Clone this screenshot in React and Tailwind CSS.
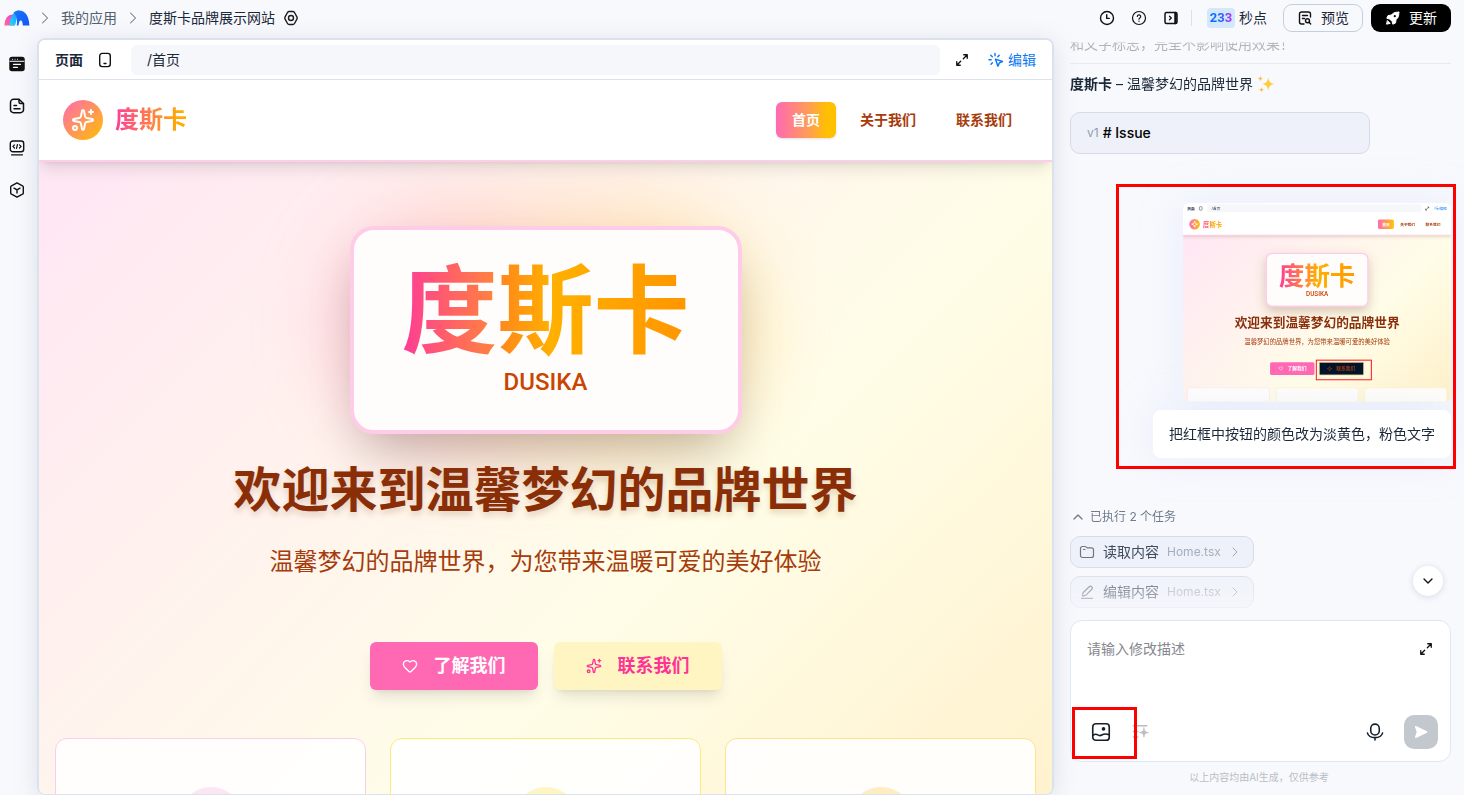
import React from 'react'
import { Heart, ChevronRight, ChevronUp, ChevronDown } from 'lucide-react'

const navItems = [
  { label: '首页', active: true },
  { label: '关于我们', active: false },
  { label: '联系我们', active: false },
]

const cards = [
  { border: 'border-[#fccee8]', dot: 'bg-[#fde6f3]' },
  { border: 'border-[#ffe97a]', dot: 'bg-[#fff5c2]' },
  { border: 'border-[#fee38a]', dot: 'bg-[#feedc0]' },
]

// ---------- icons ----------

function Icon({ size = 16, stroke = 1.5, className = '', children }) {
  return (
    <svg
      width={size}
      height={size}
      viewBox="0 0 16 16"
      fill="none"
      stroke="currentColor"
      strokeWidth={stroke}
      strokeLinecap="round"
      strokeLinejoin="round"
      className={`shrink-0 ${className}`}
      aria-hidden="true"
    >
      {children}
    </svg>
  )
}

function AppLogo() {
  return (
    <svg width="26" height="16" viewBox="0 0 26 16" className="shrink-0" aria-hidden="true">
      <defs>
        <linearGradient id="lgPink" x1="0" y1="1" x2="1" y2="0">
          <stop offset="0" stopColor="#ff6a8f" />
          <stop offset="1" stopColor="#f03fe0" />
        </linearGradient>
        <linearGradient id="lgCyan" x1="0" y1="1" x2="1" y2="0">
          <stop offset="0" stopColor="#27dcf5" />
          <stop offset="1" stopColor="#1a8bff" />
        </linearGradient>
        <linearGradient id="lgBlue" x1="0" y1="0" x2="1" y2="1">
          <stop offset="0" stopColor="#1677ff" />
          <stop offset="1" stopColor="#1554f5" />
        </linearGradient>
      </defs>
      <path d="M.5 15.500C.5 9 3.500 4.500 9 4.500l1 11z" fill="url(#lgPink)" />
      <path d="M5.500 15.500C6 7 9.500 1 15 .6c-2.500 3-1.500 9-4 14.900z" fill="url(#lgCyan)" />
      <path d="M9.500 2.500C11.300 1 13 .4 15.300.4 21 .4 25 5.500 25.400 15.500h-6.600c-.1-3-.8-5-2-5s-2 2-2.300 5h-1.800c1-5 .3-9.500-3.200-13z" fill="url(#lgBlue)" />
    </svg>
  )
}

function SparkleIcon({ size, stroke = 2, className = '' }) {
  return (
    <svg
      width={size}
      height={size}
      viewBox="0 0 24 24"
      fill="none"
      stroke="currentColor"
      strokeWidth={stroke}
      strokeLinecap="round"
      strokeLinejoin="round"
      className={`shrink-0 ${className}`}
      aria-hidden="true"
    >
      <path d="M11.017 2.814a1 1 0 0 1 1.966 0l1.051 5.558a2 2 0 0 0 1.594 1.594l5.558 1.051a1 1 0 0 1 0 1.966l-5.558 1.051a2 2 0 0 0-1.594 1.594l-1.051 5.558a1 1 0 0 1-1.966 0l-1.051-5.558a2 2 0 0 0-1.594-1.594l-5.558-1.051a1 1 0 0 1 0-1.966l5.558-1.051a2 2 0 0 0 1.594-1.594z" />
      <path d="M20 2v4M22 4h-4" />
      <circle cx="4" cy="20" r="2" />
    </svg>
  )
}

function ExpandIcon({ className }) {
  return (
    <Icon size={14} stroke={1.5} className={className}>
      <path d="M10 2h4v4M14 2L9.500 6.500M6 14H2v-4M2 14l4.500-4.500" />
    </Icon>
  )
}

function SparkleEmoji() {
  return (
    <svg width="18" height="18" viewBox="0 0 16 16" role="img" aria-label="sparkles" className="shrink-0">
      <path d="M10 2c.6 4 1.600 5.200 5.800 6-4.200.8-5.200 2-5.800 6.200C9.400 10 8.400 8.800 4.200 8 8.400 7.200 9.400 6 10 2z" fill="#ffcb3d" />
      <path d="M3 .6c.3 1.800.8 2.300 2.500 2.600C3.800 3.500 3.300 4 3 5.800 2.700 4 2.200 3.500.5 3.200 2.200 2.900 2.700 2.400 3 .6z" fill="#ffb74a" />
      <path d="M4 10.600c.3 1.600.8 2.100 2.400 2.400-1.600.3-2.100.8-2.400 2.400-.3-1.600-.8-2.100-2.400-2.400 1.600-.3 2.100-.8 2.400-2.400z" fill="#ffb74a" />
    </svg>
  )
}

// ---------- header & sidebar ----------

function Header() {
  return (
    <header className="flex h-9 shrink-0 items-center pr-[13px] pl-1 text-sm text-[#1b2838]">
      <AppLogo />
      <nav className="flex items-center">
        <ChevronRight size={20} strokeWidth={1.25} className="mr-1.5 ml-[5px] text-[#6b7785]" />
        <a href="#apps" className="text-[#545f70]">我的应用</a>
        <ChevronRight size={20} strokeWidth={1.25} className="mx-1.5 text-[#6b7785]" />
        <span>度斯卡品牌展示网站</span>
      </nav>
      <button className="ml-2" aria-label="设置">
        <Icon stroke={1.4} className="text-[#1c1c1c]">
          <path d="M6.200 1.500h3.600a2 2 0 0 1 1.700 1l2.400 4.300a2.400 2.400 0 0 1 0 2.400l-2.400 4.300a2 2 0 0 1-1.700 1H6.200a2 2 0 0 1-1.700-1L2.100 9.200a2.400 2.400 0 0 1 0-2.400l2.400-4.300a2 2 0 0 1 1.700-1z" />
          <circle cx="8" cy="8" r="2.500" />
        </Icon>
      </button>

      <div className="ml-auto flex items-center gap-4 text-[#111]">
        <button aria-label="历史">
          <Icon stroke={1.4}>
            <circle cx="8" cy="8" r="6.500" />
            <path d="M7.700 4.800v3.600h2.600" />
          </Icon>
        </button>
        <button aria-label="帮助">
          <Icon stroke={1.2}>
            <circle cx="8" cy="8" r="6.500" />
            <path d="M6.300 6.500a1.700 1.700 0 1 1 2.500 1.500c-.5.300-.8.600-.8 1.200" />
            <path d="M8 11.200v.1" />
          </Icon>
        </button>
        <button aria-label="收起面板">
          <Icon stroke={1.5}>
            <rect x="2" y="2.500" width="12" height="11" rx="1.500" />
            <path d="M12.500 3v10" strokeWidth="2.500" />
            <path d="M6.500 6.200L8.300 8 6.500 9.800" strokeWidth="1.300" />
          </Icon>
        </button>
      </div>
      <div className="mx-3 h-4 w-px bg-[#dde2ea]" />
      <div className="ml-[3px] flex items-center gap-1">
        <span className="flex h-5 w-7 items-center justify-center rounded-sm bg-[#d4e7fb] font-['Roboto',sans-serif] text-[13px]">
          <span className="bg-[linear-gradient(90deg,#0b6cff_40%,#b62df0)] bg-clip-text font-bold text-transparent">233</span>
        </span>
        <span>秒点</span>
      </div>
      <button className="ml-4 flex h-7 w-20 items-center justify-center gap-2 rounded-[9px] border border-[#c3cfdd]">
        <Icon stroke={1.4} className="text-[#111]">
          <path d="M13.500 7V4a2 2 0 0 0-2-2h-7a2 2 0 0 0-2 2v8a2 2 0 0 0 2 2H7M5.500 5.500h5M5.500 8.500h2" />
          <circle cx="10.500" cy="10.700" r="2" />
          <path d="M12 12.200l1.700 1.800" />
        </Icon>
        预览
      </button>
      <button className="ml-2 flex h-7 w-20 items-center justify-center gap-2 rounded-[9px] bg-black text-white">
        <Icon stroke={1} className="text-white">
          <path d="M13.800 2.200c-3.500-.4-5.800.8-7.400 2.800L3 5.600 1.800 8.300l2.800.7 2.500 2.500.7 2.700 2.700-1.200.6-3.400c2-1.600 3.100-3.900 2.700-7.400z" fill="currentColor" />
          <path d="M2.600 10.800l2.600 2.600-3.300.7z" fill="currentColor" />
          <circle cx="9.800" cy="6.200" r="1.100" fill="#000" stroke="none" />
        </Icon>
        更新
      </button>
    </header>
  )
}

function Sidebar() {
  return (
    <aside className="flex w-[37px] shrink-0 flex-col items-center gap-[26px] pt-[18px] pr-[3px] text-[#111]">
      <button aria-label="页面">
        <Icon>
          <rect x="1" y="1.500" width="14" height="13" rx="2" fill="currentColor" />
          <path d="M1 5.300h14" stroke="#fff" strokeWidth="1" />
          <path d="M4.500 8.300h7M4.500 11.300h4" stroke="#fff" strokeWidth="1.300" />
          <path d="M3.500 3.300h.1M6 3.300h.1M8.500 3.300h.1" stroke="#fff" strokeWidth="1" />
        </Icon>
      </button>
      <button aria-label="文档">
        <Icon>
          <path d="M10 1.300H4.500a3 3 0 0 0-3 3v7.400a3 3 0 0 0 3 3h7a3 3 0 0 0 3-3V5.500z" />
          <path d="M10 1.500v2.500a1.500 1.500 0 0 0 1.500 1.500h2.800M5 7.500h2.500M5 10.800h6" />
        </Icon>
      </button>
      <button aria-label="代码">
        <Icon stroke={1.4}>
          <rect x="1.300" y="1" width="13.400" height="10.800" rx="2.500" />
          <path d="M5.500 4.800L3.900 6.400l1.600 1.600M10.500 4.800l1.600 1.600L10.500 8M8.500 4.500l-1 3.800M2.500 14.800h11" strokeWidth="1.200" />
        </Icon>
      </button>
      <button aria-label="插件">
        <Icon stroke={1.4}>
          <path d="M8 .9l5.500 2.900a1.500 1.500 0 0 1 .8 1.300v5.800a1.500 1.500 0 0 1-.8 1.300L8 15.100l-5.500-2.900a1.500 1.500 0 0 1-.8-1.300V5.100a1.500 1.500 0 0 1 .8-1.300z" />
          <path d="M5 6.200l3 1.700 3-1.700M8 8v3" />
        </Icon>
      </button>
    </aside>
  )
}

// ---------- site preview ----------

function PreviewToolbar() {
  return (
    <div className="flex h-10 shrink-0 items-center border-b border-[#dde3ec] bg-white px-4 text-sm text-[#1b2838]">
      <span className="font-bold">页面</span>
      <button className="ml-3.5" aria-label="移动端">
        <Icon stroke={1.4} className="text-[#111]">
          <rect x="2.700" y="1.400" width="10.600" height="13.200" rx="2.500" />
          <path d="M7 11.500h2" />
        </Icon>
      </button>
      <input
        aria-label="页面路径"
        defaultValue="/首页"
        className="mr-[15px] ml-[18px] h-[30px] min-w-0 flex-1 rounded-md bg-[#f5f7fb] px-4 pb-0.5"
      />
      <button aria-label="全屏"><ExpandIcon className="text-[#111]" /></button>
      <button className="ml-[19px] flex items-center gap-1 text-[#0b78f5]">
        <Icon stroke={1.4}>
          <path d="M7.500 7.200l7 2.300-3.100 1.400-1.500 3.300z" />
          <path d="M7 1.500v2.200M2.800 3.300l1.500 1.500M1 7.800h2.200M3 12.200l1.400-1.500M11.200 3.200L9.800 4.800" />
        </Icon>
        编辑
      </button>
    </div>
  )
}

function SiteNav() {
  return (
    <div className="relative flex h-[82px] shrink-0 items-center border-b-2 border-[#fccee8] bg-white px-6 shadow-lg">
      <div className="flex h-10 w-10 items-center justify-center rounded-full bg-[linear-gradient(135deg,#ff69b4,#ffc000)] text-white">
        <SparkleIcon size={24} />
      </div>
      <span className="ml-3 bg-[linear-gradient(90deg,#ff3c96,#ff8048_50%,#ffab00_90%)] bg-clip-text text-2xl font-bold text-transparent">
        度斯卡
      </span>
      <nav className="ml-auto flex gap-2 text-sm font-bold">
        {navItems.map((item) => (
          <a
            key={item.label}
            href="#nav"
            className={
              item.active
                ? 'flex h-9 items-center rounded-md bg-[linear-gradient(90deg,#ff69b4,#ff9d55_55%,#ffc000_85%)] px-4 text-white shadow-sm'
                : 'flex h-9 items-center px-4 text-[#a63c0c]'
            }
          >
            {item.label}
          </a>
        ))}
      </nav>
    </div>
  )
}

function Hero() {
  return (
    <div className="min-h-0 flex-1 overflow-hidden bg-[linear-gradient(135deg,#ffe6f4_0%,#fffde8_62%,#fff2ce_100%)] px-4 pt-16">
      <div className="flex flex-col items-center text-center">
        <div className="relative">
          <div className="absolute -inset-4 rounded-full bg-[linear-gradient(90deg,#ffa8c8,#ffc89a,#ffe08a)] opacity-60 blur-2xl" />
          <div className="relative rounded-3xl border-4 border-[#fecce8] bg-[#fffdfc] px-12 py-8 shadow-2xl">
            <div className="bg-[linear-gradient(90deg,#ff3c96,#ff8040_31%,#ff8c18_36%,#ffb000_52%,#ff9500)] bg-clip-text text-8xl leading-none font-bold text-transparent">
              度斯卡
            </div>
            <div className="mt-2 font-['Roboto',sans-serif] text-2xl font-medium text-[#ca4500]">DUSIKA</div>
          </div>
        </div>
        <h1 className="relative mt-8 text-5xl font-bold text-[#8a2e08] [text-shadow:0_4px_6px_rgba(120,60,10,0.2)]">
          欢迎来到温馨梦幻的品牌世界
        </h1>
        <p className="relative mt-8 text-2xl text-[#a63c0c]">温馨梦幻的品牌世界，为您带来温暖可爱的美好体验</p>
        <div className="mt-16 flex gap-4 text-lg font-bold">
          <button className="flex h-12 items-center gap-4 rounded-md bg-[#ff69b4] px-8 text-white shadow-lg">
            <Heart size={16} strokeWidth={2} />
            了解我们
          </button>
          <button className="flex h-12 items-center gap-4 rounded-md bg-[#fff5c2] px-8 text-[#ff3296] shadow-lg">
            <SparkleIcon size={16} />
            联系我们
          </button>
        </div>
      </div>
      <div className="mt-12 grid grid-cols-3 gap-6">
        {cards.map((c) => (
          <div key={c.border} className={`flex h-64 justify-center rounded-xl border bg-white/90 pt-12 ${c.border}`}>
            <div className={`h-16 w-16 rounded-full ${c.dot}`} />
          </div>
        ))}
      </div>
    </div>
  )
}

// ---------- chat ----------

// small snapshot of the site attached to the user's message
function Snapshot() {
  return (
    <svg
      viewBox="0 0 1013 752"
      className="h-[199px] w-[268px] rounded-md font-['Roboto','Noto_Sans_CJK_SC',sans-serif]"
      role="img"
      aria-label="页面截图"
    >
      <defs>
        <linearGradient id="snBg" gradientUnits="userSpaceOnUse" x1="0" y1="122" x2="822" y2="944">
          <stop offset="0" stopColor="#ffe6f4" />
          <stop offset="0.62" stopColor="#fffde8" />
          <stop offset="1" stopColor="#fff0c8" />
        </linearGradient>
        <linearGradient id="snText">
          <stop offset="0" stopColor="#ff3c96" />
          <stop offset="0.32" stopColor="#ff8040" />
          <stop offset="0.5" stopColor="#ffb000" />
          <stop offset="1" stopColor="#ff9a00" />
        </linearGradient>
        <linearGradient id="snBtn">
          <stop offset="0" stopColor="#ff69b4" />
          <stop offset="1" stopColor="#ffc400" />
        </linearGradient>
        <filter id="snShadow" x="-20%" y="-20%" width="140%" height="150%">
          <feDropShadow dx="0" dy="18" stdDeviation="20" floodColor="#7a5030" floodOpacity="0.3" />
        </filter>
        <filter id="snNav" x="-5%" y="-5%" width="110%" height="130%">
          <feDropShadow dx="0" dy="8" stdDeviation="7" floodColor="#7a5030" floodOpacity="0.2" />
        </filter>
      </defs>
      <rect width="1013" height="752" fill="url(#snBg)" />
      <rect width="1013" height="121" fill="#fff" filter="url(#snNav)" />
      <rect y="120" width="1013" height="3" fill="#fccee8" />
      <rect x="92" y="5" width="810" height="30" rx="6" fill="#f5f7fb" />
      <text x="16" y="26" fontSize="14" fontWeight="700" fill="#1b2838">页面</text>
      <rect x="62" y="14" width="10" height="13" rx="2" fill="none" stroke="#444" strokeWidth="2" />
      <text x="108" y="26" fontSize="14" fill="#1b2838">/首页</text>
      <path d="M918 26l10-10M924 15h5v5M917 21v6h5" fill="none" stroke="#222" strokeWidth="2" />
      <path d="M951 14l3 4M960 12v4M950 22h4M958 19l8 3-4 4z" fill="none" stroke="#0b78f5" strokeWidth="2" />
      <text x="969" y="26" fontSize="14" fill="#0b78f5">编辑</text>
      <circle cx="44" cy="80" r="20" fill="url(#snBtn)" />
      <path d="M44 69l3 8 8 3-8 3-3 8-3-8-8-3 8-3z" fill="none" stroke="#fff" strokeWidth="3" />
      <text x="76" y="89" fontSize="24" fontWeight="700" fill="url(#snText)">度斯卡</text>
      <rect x="737" y="62" width="60" height="36" rx="6" fill="url(#snBtn)" />
      <text x="753" y="85" fontSize="14" fontWeight="700" fill="#fff">首页</text>
      <text x="821" y="85" fontSize="14" fontWeight="700" fill="#a63c0c">关于我们</text>
      <text x="917" y="85" fontSize="14" fontWeight="700" fill="#a63c0c">联系我们</text>
      <rect x="315" y="190" width="384" height="200" rx="22" fill="#fffdfc" stroke="#fecce8" strokeWidth="5" filter="url(#snShadow)" />
      <text x="507" y="308" fontSize="96" fontWeight="700" textAnchor="middle" fill="url(#snText)">度斯卡</text>
      <text x="507" y="352" fontSize="24" fontWeight="500" textAnchor="middle" fill="#ca4500">DUSIKA</text>
      <text x="507" y="469" fontSize="48" fontWeight="700" textAnchor="middle" fill="#89300c">欢迎来到温馨梦幻的品牌世界</text>
      <text x="507" y="532" fontSize="24" textAnchor="middle" fill="#a63c0c">温馨梦幻的品牌世界，为您带来温暖可爱的美好体验</text>
      <rect x="329" y="602" width="168" height="48" rx="6" fill="#ff69b4" />
      <path d="M370 632c-10-7-7-13-3-13 2 0 3 2 3 2s1-2 3-2c4 0 7 6-3 13z" fill="none" stroke="#fff" strokeWidth="2" />
      <text x="395" y="633" fontSize="18" fontWeight="700" fill="#fff">了解我们</text>
      <rect x="515" y="602" width="168" height="48" rx="4" fill="#02142b" stroke="#f3dc90" strokeWidth="3" />
      <path d="M554 617l2 7 7 2-7 2-2 7-2-7-7-2 7-2z" fill="none" stroke="#a63c0c" strokeWidth="2" />
      <text x="579" y="633" fontSize="18" fontWeight="700" fill="#a63c0c">联系我们</text>
      <rect x="504" y="594" width="208" height="74" fill="none" stroke="#ff2020" strokeWidth="4" />
      <path d="M17 752v-42a12 12 0 0 1 12-12h286a12 12 0 0 1 12 12v42z" fill="#fffdfc" stroke="#fbe0e8" strokeWidth="2" />
      <path d="M352 752v-42a12 12 0 0 1 12-12h286a12 12 0 0 1 12 12v42z" fill="#fffdfa" stroke="#fbeec0" strokeWidth="2" />
      <path d="M687 752v-42a12 12 0 0 1 12-12h286a12 12 0 0 1 12 12v42z" fill="#fffdf8" stroke="#fbeec0" strokeWidth="2" />
    </svg>
  )
}

function TaskChip({ icon, label, file }) {
  return (
    <button className="flex h-8 w-[184px] items-center rounded-[10px] border border-[#d3dce8] bg-[#eef1f9] pl-2 text-sm text-[#3f4d5e]">
      {icon}
      <span className="ml-2">{label}</span>
      <span className="ml-2 text-xs text-[#a3afbd]">{file}</span>
      <ChevronRight size={16} strokeWidth={1.5} className="ml-1.5 text-[#9aa7b6]" />
    </button>
  )
}

function Chat() {
  return (
    <div className="relative flex min-h-0 flex-1 flex-col">
      <div className="flex min-h-0 flex-1 flex-col justify-end overflow-hidden pr-[13px] pb-3 pl-4 [mask-image:linear-gradient(to_bottom,transparent_4px,rgba(0,0,0,0.3)_5px,rgba(0,0,0,0.4)_16px,#000_36px,#000_calc(100%_-_56px),rgba(0,0,0,0.3)_calc(100%_-_12px),transparent_100%)]">
        <p className="shrink-0 text-sm leading-[22px] text-[#1b2838]">和文字标志，完全不影响使用效果！</p>
        <hr className="mt-2 shrink-0 border-[#dfe4ec]" />
        <p className="mt-2 flex shrink-0 items-center gap-1 text-sm leading-6 text-[#1b2838]">
          <strong>度斯卡</strong>
          <span>–</span>
          <span>温馨梦幻的品牌世界</span>
          <SparkleEmoji />
        </p>
        <div className="mt-4 flex h-[42px] w-[300px] shrink-0 items-center gap-1 rounded-[10px] border border-[#d3dbe7] bg-[#eef1f9] px-4 text-sm">
          <span className="text-xs text-[#929caa]">v1</span>
          <span className="font-medium text-black"># Issue</span>
        </div>

        <div className="relative mt-[49px] flex shrink-0 flex-col items-end gap-2 self-end">
          <div className="rounded-md shadow-[0_0_40px_rgba(200,218,250,0.35)]">
            <Snapshot />
          </div>
          <p className="flex h-12 items-center rounded-lg bg-white px-4 text-sm text-[#1b2838] shadow-[0_0_40px_rgba(200,218,250,0.35)]">
            把红框中按钮的颜色改为淡黄色，粉色文字
          </p>
          <div className="pointer-events-none absolute -top-[19px] -right-[5px] -bottom-[11px] -left-[37px] border-3 border-[#ff0000]" />
        </div>

        <button className="mt-[50px] flex shrink-0 items-center gap-1 self-start text-xs leading-[18px] text-[#6f7c8c]">
          <ChevronUp size={16} strokeWidth={2} />
          已执行 2 个任务
        </button>
        <div className="mt-2.5 flex shrink-0 flex-col gap-2">
          <TaskChip
            label="读取内容"
            file="Home.tsx"
            icon={
              <Icon stroke={1.2} className="text-[#6b7785]">
                <path d="M1.500 4.500a2 2 0 0 1 2-2h2.700c.8 0 1.300 1.300 2.300 1.300h4a2 2 0 0 1 2 2v5.700a2 2 0 0 1-2 2h-9a2 2 0 0 1-2-2zM4.500 5.500h1.500" />
              </Icon>
            }
          />
          <TaskChip
            label="编辑内容"
            file="Home.tsx"
            icon={
              <Icon stroke={1.2} className="text-[#6b7785]">
                <path d="M3.500 12l.5-3.200 6.500-6.300a1.300 1.300 0 0 1 1.900 0l.6.600a1.300 1.300 0 0 1 0 1.900L6.700 11.300zM2.500 14.300h11" />
              </Icon>
            }
          />
        </div>
      </div>
      <button
        aria-label="回到底部"
        className="absolute right-[21px] bottom-6 flex h-[30px] w-[30px] items-center justify-center rounded-full bg-white text-[#111] shadow-[0_1px_6px_rgba(60,80,110,0.18)]"
      >
        <ChevronDown size={16} strokeWidth={2} />
      </button>
    </div>
  )
}

function Composer() {
  return (
    <form
      className="relative mr-[13px] ml-4 shrink-0 rounded-xl border border-[#dbe8f5] bg-white pt-4 pr-3 pb-3 pl-4"
      onSubmit={(e) => e.preventDefault()}
    >
      <div className="flex items-start">
        <textarea
          aria-label="修改描述"
          placeholder="请输入修改描述"
          className="block h-[78px] flex-1 resize-none text-sm leading-6 placeholder:text-[#85888e]"
        />
        <button type="button" className="mt-[5px] mr-[5px]" aria-label="展开">
          <ExpandIcon className="text-[#111]" />
        </button>
      </div>
      <div className="flex h-[34px] items-center text-[#14202c]">
        <button type="button" className="ml-1" aria-label="上传图片">
          <Icon size={20} stroke={1.3}>
            <rect x="1.400" y="1.400" width="13.200" height="13.200" rx="2.500" />
            <path d="M1.600 10.600c1.500-1 2.700-1 3.800-.3s1.900.9 3.200.1 3-1.300 5.800-.3" />
            <circle cx="10" cy="5.500" r=".8" fill="currentColor" />
          </Icon>
        </button>
        <button type="button" className="ml-5 text-[#b9bcc1]" aria-label="优化描述">
          <Icon size={18} stroke={1.3}>
            <path d="M2 2.500h12M2 7.500h4M2 12.500h4" />
            <path d="M11.500 4.300c.4 3 1 3.700 4 4.200-3 .5-3.600 1.200-4 4.200-.4-3-1-3.700-4-4.200 3-.5 3.600-1.200 4-4.200z" fill="currentColor" strokeWidth=".6" />
          </Icon>
        </button>
        <button type="button" className="mr-5 ml-auto" aria-label="语音输入">
          <Icon size={18} stroke={1.4}>
            <rect x="4.200" y="1" width="7.600" height="9.600" rx="3.800" />
            <path d="M1.300 9c.8 2.700 3.300 4 6.700 4s5.900-1.300 6.700-4M8 13v2" />
          </Icon>
        </button>
        <button
          type="submit"
          aria-label="发送"
          className="flex h-[34px] w-[34px] items-center justify-center rounded-[10px] bg-[#c3c7ce] text-white"
        >
          <Icon size={16}>
            <path d="M2.700 2.800l11 5.200-11 5.200L4.500 8z" fill="currentColor" />
          </Icon>
        </button>
      </div>
      <div className="pointer-events-none absolute bottom-[2px] left-[1px] h-[52px] w-[65px] border-3 border-[#ff0000]" />
    </form>
  )
}

export default function App() {
  return (
    <div className="flex h-screen flex-col overflow-hidden bg-[#f8f9fd] font-['Inter','Noto_Sans_CJK_SC',sans-serif]">
      <Header />
      <div className="flex min-h-0 flex-1 pt-0.5">
        <Sidebar />
        <main className="flex min-w-0 flex-1 flex-col overflow-hidden rounded-lg border-2 border-b border-[#dae3ed] shadow-[0_4px_24px_rgba(100,120,145,0.2)]">
          <PreviewToolbar />
          <SiteNav />
          <Hero />
        </main>
        <aside className="flex w-[410px] shrink-0 flex-col">
          <Chat />
          <Composer />
          <p className="shrink-0 pt-[7px] pb-2.5 text-center text-[10px] leading-4 text-[#b9bec6]">以上内容均由AI生成，仅供参考</p>
        </aside>
      </div>
    </div>
  )
}
